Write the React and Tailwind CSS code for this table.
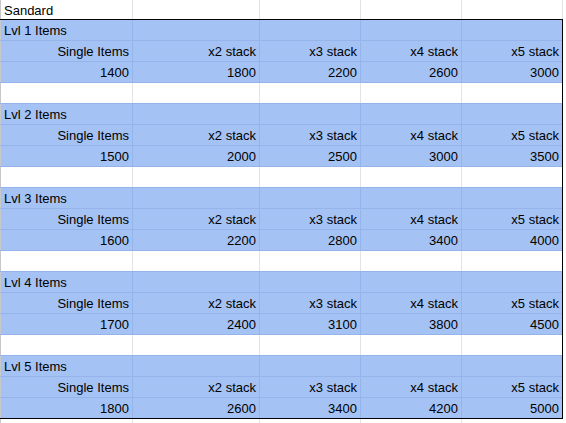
import React from "react";

const levels = [
  { name: "Lvl 1 Items", vals: ["1400", "1800", "2200", "2600", "3000"] },
  { name: "Lvl 2 Items", vals: ["1500", "2000", "2500", "3000", "3500"] },
  { name: "Lvl 3 Items", vals: ["1600", "2200", "2800", "3400", "4000"] },
  { name: "Lvl 4 Items", vals: ["1700", "2400", "3100", "3800", "4500"] },
  { name: "Lvl 5 Items", vals: ["1800", "2600", "3400", "4200", "5000"] },
];

const heads = ["Single Items", "x2 stack", "x3 stack", "x4 stack", "x5 stack"];

function Row({ cells, blue, right, last, hClass = "h-[20px]" }) {
  const bg = blue ? "bg-[#a4c2f4]" : "bg-white";
  const vline = blue ? "border-[#95b4e9]" : "border-[#e2e3e3]";
  const bottom = last ? "" : "border-b border-b-[#95b4e9]";
  const widths = ["w-[133px] border-l border-l-[#c8c8c8]", "w-[127px]", "w-[101px]", "w-[101px]", "w-[100px]"];
  return (
    <div className={`flex ${bottom}`}>
      {widths.map((w, i) => (
        <div
          key={i}
          className={`${w} ${hClass} ${bg} ${i < 4 ? `border-r ${vline}` : ""} flex items-center ${right ? "justify-end pr-[3px]" : "justify-start pl-[3px]"} whitespace-nowrap overflow-hidden leading-none pt-[1px]`}
        >
          {cells[i] || ""}
        </div>
      ))}
    </div>
  );
}

export default function App() {
  const rows = [];
  levels.forEach((lv, li) => {
    rows.push({ cells: [lv.name], blue: true, right: false });
    rows.push({ cells: heads, blue: true, right: true });
    rows.push({ cells: lv.vals, blue: true, right: true });
    if (li < levels.length - 1) rows.push({ cells: [], blue: false, right: false });
  });
  return (
    <div className="w-[566px] h-[423px] bg-white overflow-hidden text-[13px] text-black font-['Liberation_Sans',Arial,sans-serif]">
      <div className="flex">
        <div className="w-[563px]">
          <div className="flex">
            <div className="w-[133px] h-[19px] border-l border-l-[#c8c8c8] border-r border-[#e2e3e3] flex items-center pl-[3px] leading-none pt-[1px]">Sandard</div>
            <div className="w-[127px] h-[19px] border-r border-[#e2e3e3]"></div>
            <div className="w-[101px] h-[19px] border-r border-[#e2e3e3]"></div>
            <div className="w-[101px] h-[19px] border-r border-[#e2e3e3]"></div>
            <div className="w-[101px] h-[19px] border-r border-[#e2e3e3]"></div>
          </div>
          <div className="border-t border-r border-b border-black">
            {rows.map((r, i) => (
              <Row key={i} {...r} last={i === rows.length - 1} />
            ))}
          </div>
          <div className="flex">
            <div className="w-[133px] h-[4px] border-l border-l-[#c8c8c8] border-r border-[#e2e3e3]"></div>
            <div className="w-[127px] h-[4px] border-r border-[#e2e3e3]"></div>
            <div className="w-[101px] h-[4px] border-r border-[#e2e3e3]"></div>
            <div className="w-[101px] h-[4px] border-r border-[#e2e3e3]"></div>
            <div className="w-[101px] h-[4px]"></div>
          </div>
        </div>
        <div className="w-[3px]"></div>
      </div>
    </div>
  );
}
